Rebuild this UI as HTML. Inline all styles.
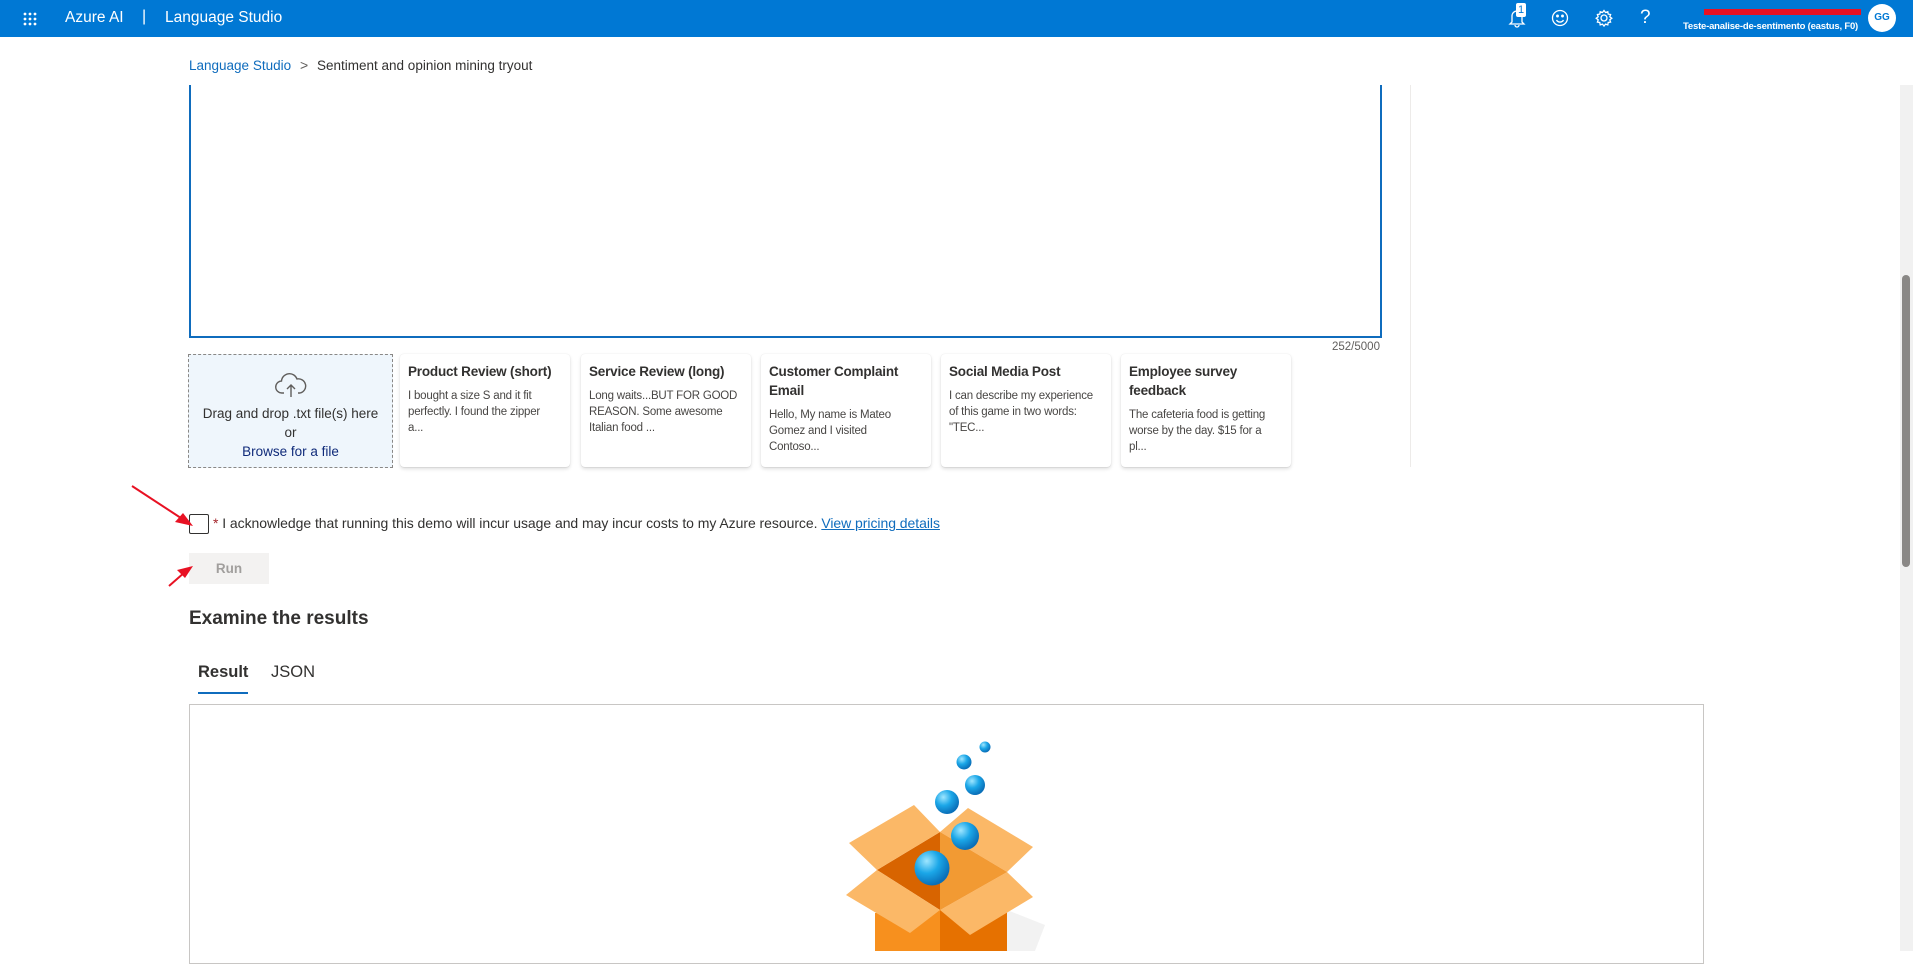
<!DOCTYPE html>
<html><head><meta charset="utf-8"><style>
*{box-sizing:border-box;margin:0;padding:0}
body{width:1913px;height:951px;overflow:hidden;background:#fff;font-family:"Segoe UI","Liberation Sans",sans-serif;color:#323130;position:relative}
.abs{position:absolute}
.top{left:0;top:0;width:1913px;height:37px;background:#0078d4;color:#fff}
.card{position:absolute;top:354px;width:170px;height:113px;background:#fff;border-radius:4px;box-shadow:0 1.6px 3.6px rgba(0,0,0,.13),0 .3px .9px rgba(0,0,0,.11);padding:8px 8px}
.card h4{font-size:13.5px;font-weight:600;line-height:19px;color:#323130;margin-bottom:7px;letter-spacing:-.2px}
.card p{font-size:11.5px;line-height:16px;color:#484644;letter-spacing:-.2px;width:150px}
</style></head><body>
<div class="abs top">
 <svg class="abs" style="left:23px;top:12px" width="14" height="14"><g fill="#fff"><circle cx="2" cy="2" r="1.4"/><circle cx="7" cy="2" r="1.4"/><circle cx="12" cy="2" r="1.4"/><circle cx="2" cy="7" r="1.4"/><circle cx="7" cy="7" r="1.4"/><circle cx="12" cy="7" r="1.4"/><circle cx="2" cy="12" r="1.4"/><circle cx="7" cy="12" r="1.4"/><circle cx="12" cy="12" r="1.4"/></g></svg>
 <div class="abs" style="left:65px;top:9px;font-size:15.5px">Azure AI</div>
 <div class="abs" style="left:142px;top:8px;font-size:16px">|</div>
 <div class="abs" style="left:165px;top:9px;font-size:15.5px">Language Studio</div>
 <svg class="abs" style="left:1508px;top:8px" width="18" height="20" fill="none" stroke="#fff" stroke-width="1.3"><path d="M4 14V8a5 5 0 0 1 10 0v6l2 2H2z M7 17a2 2 0 0 0 4 0"/></svg>
 <div class="abs" style="left:1516px;top:3px;width:10px;height:14px;background:#fff;color:#0078d4;font-size:11px;border-radius:2px;text-align:center;line-height:14px">1</div>
 <svg class="abs" style="left:1550px;top:8px" width="20" height="20" fill="none" stroke="#fff" stroke-width="1.3"><circle cx="10" cy="10" r="7.5"/><circle cx="7.5" cy="8" r=".8" fill="#fff"/><circle cx="12.5" cy="8" r=".8" fill="#fff"/><path d="M6.5 12a4 4 0 0 0 7 0"/></svg>
 <svg class="abs" style="left:1594px;top:8px" width="20" height="20" fill="none" stroke="#fff" stroke-width="1.3"><circle cx="10" cy="10" r="3"/><path d="M10 2.5l1.5 2 2.3-.8.4 2.4 2.4.4-.8 2.3 2 1.5-2 1.5.8 2.3-2.4.4-.4 2.4-2.3-.8-1.5 2-1.5-2-2.3.8-.4-2.4-2.4-.4.8-2.3-2-1.5 2-1.5-.8-2.3 2.4-.4.4-2.4 2.3.8z"/></svg>
 <div class="abs" style="left:1640px;top:7px;font-size:19px;font-weight:300">?</div>
 <div class="abs" style="left:1704px;top:9px;width:157px;height:6px;background:#e81123"></div>
 <div class="abs" style="left:1683px;top:21px;font-size:9.5px;font-weight:600;letter-spacing:-.2px">Teste-analise-de-sentimento (eastus, F0)</div>
 <div class="abs" style="left:1868px;top:4px;width:28px;height:28px;border-radius:50%;background:#fff;color:#0078d4;font-size:10px;font-weight:700;text-align:center;line-height:28px">GG</div>
</div>
<div class="abs" style="left:189px;top:58px;font-size:13.5px;color:#0f6cbd">Language Studio</div>
<div class="abs" style="left:300px;top:57px;font-size:14px;color:#605e5c">&gt;</div>
<div class="abs" style="left:317px;top:58px;font-size:13.5px;color:#323130">Sentiment and opinion mining tryout</div>
<div class="abs" style="left:189px;top:85px;width:1193px;height:253px;border:2px solid #0f6cbd;border-top:none"></div>
<div class="abs" style="left:1332px;top:341px;font-size:11.5px;color:#605e5c">252/5000</div>
<div class="abs" style="left:1410px;top:85px;width:1px;height:382px;background:#edebe9"></div>
<div class="abs" style="left:188px;top:354px;width:205px;height:114px;border:1px dashed #8a8886;background:#eff6fc;text-align:center;font-size:13.5px;line-height:19px;padding-top:16px">
 <svg width="34" height="28" fill="none" stroke="#605e5c" stroke-width="1.4"><path d="M10 22H8a6 6 0 0 1-.5-12A8 8 0 0 1 23 8a6 6 0 0 1 3 14h-2"/><path d="M17 26V14m-4 4 4-4 4 4"/></svg><br>
 Drag and drop .txt file(s) here<br>or<br><span style="color:#102b7a">Browse for a file</span></div>
<div class="card" style="left:400px"><h4>Product Review (short)</h4><p>I bought a size S and it fit perfectly. I found the zipper a...</p></div>
<div class="card" style="left:581px"><h4>Service Review (long)</h4><p>Long waits...BUT FOR GOOD REASON. Some awesome Italian food ...</p></div>
<div class="card" style="left:761px"><h4>Customer Complaint Email</h4><p>Hello, My name is Mateo Gomez and I visited Contoso...</p></div>
<div class="card" style="left:941px"><h4>Social Media Post</h4><p>I can describe my experience of this game in two words: "TEC...</p></div>
<div class="card" style="left:1121px"><h4>Employee survey feedback</h4><p>The cafeteria food is getting worse by the day. $15 for a pl...</p></div>
<div class="abs" style="left:189px;top:514px;width:20px;height:20px;border:1px solid #323130;border-radius:2px"></div>
<div class="abs" style="left:213px;top:515px;font-size:14px;letter-spacing:-.05px"><span style="color:#a4262c">*</span> I acknowledge that running this demo will incur usage and may incur costs to my Azure resource. <span style="color:#0f6cbd;text-decoration:underline">View pricing details</span></div>
<div class="abs" style="left:189px;top:553px;width:80px;height:31px;background:#f3f2f1;color:#a19f9d;font-size:13.5px;font-weight:600;text-align:center;line-height:31px">Run</div>
<svg class="abs" style="left:125px;top:480px" width="90" height="110"><path d="M7 6 L62 42" stroke="#e81123" stroke-width="2"/><path d="M68 46 L50 42 L58 33z" fill="#e81123"/><path d="M44 106 L60 92" stroke="#e81123" stroke-width="2"/><path d="M68 86 L52 90 L60 98z" fill="#e81123"/></svg>
<div class="abs" style="left:189px;top:608px;font-size:19px;font-weight:600">Examine the results</div>
<div class="abs" style="left:198px;top:663px;font-size:16.5px;font-weight:600">Result</div>
<div class="abs" style="left:198px;top:692px;width:50px;height:2px;background:#0f6cbd"></div>
<div class="abs" style="left:271px;top:663px;font-size:16.5px">JSON</div>
<div class="abs" style="left:189px;top:704px;width:1515px;height:260px;border:1px solid #c8c6c4"></div>
<svg class="abs" style="left:820px;top:720px" width="260" height="231" viewBox="0 0 260 231">
 <defs><radialGradient id="s" cx=".35" cy=".3" r=".7"><stop offset="0" stop-color="#9fe6ff"/><stop offset=".5" stop-color="#1ba7e8"/><stop offset="1" stop-color="#0a6fb8"/></radialGradient></defs>
 <path d="M187 190L225 205 215 231 187 231z" fill="#f2f2f2"/>
 <path d="M55 193L120 190 120 231 55 231z" fill="#f7901e"/>
 <path d="M120 190L187 160 187 231 120 231z" fill="#e67100"/>
 <path d="M57 150L120 112 187 152 120 190z" fill="#d86400"/>
 <path d="M120 112L187 152 120 190z" fill="#f29a33"/>
 <path d="M29 123L94 85 120 112 57 150z" fill="#fbb867"/>
 <path d="M120 112L148 88 213 127 187 152z" fill="#fbb867"/>
 <path d="M26 175L57 150 120 190 90 213z" fill="#fbb867"/>
 <path d="M120 190L187 152 213 177 150 215z" fill="#fbb867"/>
 <circle cx="165" cy="27" r="5.5" fill="url(#s)"/>
 <circle cx="144" cy="42" r="7.5" fill="url(#s)"/>
 <circle cx="155" cy="65" r="10" fill="url(#s)"/>
 <circle cx="127" cy="82" r="12" fill="url(#s)"/>
 <circle cx="145" cy="116" r="14" fill="url(#s)"/>
 <circle cx="112" cy="148" r="17.5" fill="url(#s)"/>
</svg>
<div class="abs" style="left:1900px;top:85px;width:13px;height:866px;background:#f1f1f1"></div>
<div class="abs" style="left:1902px;top:275px;width:8px;height:292px;background:#8a8886;border-radius:4px"></div>
</body></html>
